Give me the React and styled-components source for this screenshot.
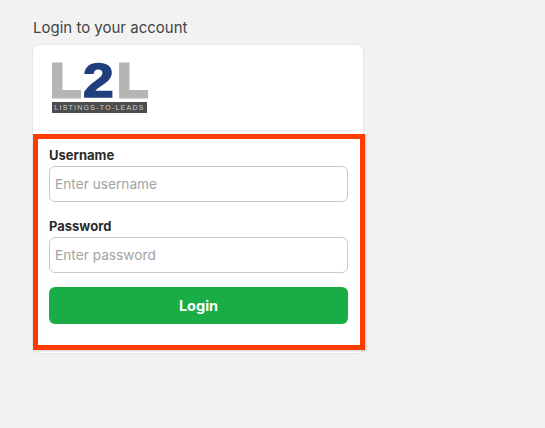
import React from 'react'
import styled, { createGlobalStyle } from 'styled-components'

const GlobalStyle = createGlobalStyle`
  html, body {
    margin: 0;
    padding: 0;
    height: 100%;
    background: #f2f2f2;
    font-family: Inter, "Liberation Sans", sans-serif;
  }
  * { box-sizing: border-box; }
`

const Page = styled.div`
  width: 545px;
  height: 428px;
  padding: 18px 0 0 33px;
  overflow: hidden;
`

const Title = styled.h1`
  margin: 0 0 8px;
  font-size: 15px;
  line-height: 19px;
  font-weight: 400;
  color: #444;
`

const Card = styled.div`
  width: 330px;
  height: 308px;
  background: #fff;
  border-radius: 6px;
  box-shadow: 0 0 2px rgba(0, 0, 0, 0.16);
`

const CardHeader = styled.div`
  height: 86px;
  margin: 0 9px 0 16px;
  padding: 13px 0 0 3px;
  border-bottom: 1px solid #e6e6e6;
`

const Form = styled.form`
  width: 332px;
  height: 216px;
  margin-top: 3px;
  padding: 8px 12px 0 11px;
  border: 5px solid #ff3c00;
  box-shadow: 1px 1px 2px rgba(0, 0, 0, 0.2);
  background: #fff;
`

const Field = styled.div`
  margin-bottom: ${props => props.gap}px;
`

const Label = styled.label`
  display: block;
  margin-bottom: 3px;
  font-size: 13px;
  line-height: 16px;
  font-weight: 700;
  color: #2b2b2b;
`

const Input = styled.input`
  display: block;
  width: 100%;
  height: 36px;
  padding: 0 5px;
  background: #fff;
  border: 1px solid #c9c9c9;
  border-radius: 6px;
  outline: none;
  font-family: inherit;
  font-size: 13.7px;
  color: #333;
  &::placeholder {
    color: #a3a3a3;
    opacity: 1;
  }
`

const SubmitButton = styled.button`
  display: block;
  width: 100%;
  height: 37px;
  border: 0;
  border-radius: 6px;
  background: #18ad45;
  color: #fff;
  font-family: inherit;
  font-size: 14.5px;
  font-weight: 700;
  cursor: pointer;
`

const Logo = () => (
  <svg width="96" height="56" viewBox="0 0 96 56" style={{ display: 'block', overflow: 'visible' }}>
    <text
      transform="translate(-1.8 38.5) scale(1.05 1)"
      fontFamily="Liberation Sans"
      fontWeight="700"
      fontSize="48"
      stroke="#b5b6b4"
      strokeWidth="3"
      fill="#b5b6b4"
    >
      L
    </text>
    <text
      transform="translate(65.2 38.5) scale(1.05 1)"
      fontFamily="Liberation Sans"
      fontWeight="700"
      fontSize="48"
      stroke="#b5b6b4"
      strokeWidth="3"
      fill="#b5b6b4"
    >
      L
    </text>
    <text
      transform="translate(31 39.3) scale(1.13 1)"
      fontFamily="Liberation Sans"
      fontWeight="700"
      fontSize="49"
      stroke="#1f3f7c"
      strokeWidth="1.5"
      fill="#1f3f7c"
    >
      2
    </text>
    <rect x="0" y="44" width="95" height="11" fill="#4d4d4d" />
    <text
      x="47.5"
      y="52"
      textAnchor="middle"
      fontFamily="Liberation Sans"
      fontSize="7"
      letterSpacing="1.25"
      fill="#cfcfcf"
    >
      LISTINGS-TO-LEADS
    </text>
  </svg>
)

export default function App() {
  return (
    <Page>
      <GlobalStyle />
      <Title>Login to your account</Title>
      <Card>
        <CardHeader>
          <Logo />
        </CardHeader>
        <Form onSubmit={e => e.preventDefault()}>
          <Field gap={15.5}>
            <Label htmlFor="username">Username</Label>
            <Input id="username" type="text" placeholder="Enter username" />
          </Field>
          <Field gap={14.5}>
            <Label htmlFor="password">Password</Label>
            <Input id="password" type="password" placeholder="Enter password" />
          </Field>
          <SubmitButton type="submit">Login</SubmitButton>
        </Form>
      </Card>
    </Page>
  )
}
